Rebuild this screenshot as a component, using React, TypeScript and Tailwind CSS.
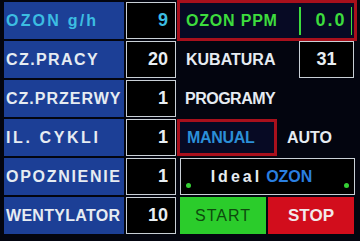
const font = { fontFamily: '"Liberation Sans", Arial, sans-serif' };

type Row = { label: string; value: string; track: string; cyan?: boolean };

const rows: Row[] = [
  { label: "OZON g/h", value: "9", track: "tracking-[2.2px]", cyan: true },
  { label: "CZ.PRACY", value: "20", track: "tracking-[1.4px]" },
  { label: "CZ.PRZERWY", value: "1", track: "tracking-[1px]" },
  { label: "IL. CYKLI", value: "1", track: "tracking-[2.6px]" },
  { label: "OPOZNIENIE", value: "1", track: "tracking-[1.7px]" },
  { label: "WENTYLATOR", value: "10", track: "tracking-[0.3px]" },
];

function ValueBox({ value, cyan }: { value: string; cyan?: boolean }) {
  return (
    <div className="flex h-full items-center justify-end border-[1.5px] border-[#c9d0d6] bg-black pr-[7px]">
      <span className={`text-[18px] font-bold ${cyan ? "text-[#3cbde2]" : "text-[#e8eef2]"}`}>{value}</span>
    </div>
  );
}

export default function App() {
  return (
    <div
      className="flex h-[241px] w-[360px] gap-[1px] overflow-hidden bg-[#03050f] pl-[4px] pt-[2px]"
      style={font}
    >
      {/* left column: settings */}
      <div className="grid w-[172px] grid-rows-[37px_37px_37px_37px_37px_37px] gap-y-[2px]">
        {rows.map((r) => (
          <div key={r.label} className="grid grid-cols-[120px_50px] gap-x-[2px]">
            <div className="flex items-center bg-[#1c3f96] pl-[2px]">
              <span
                className={`whitespace-pre text-[16px] font-bold ${r.track} ${
                  r.cyan ? "text-[#3cbde2]" : "text-[#e6ecf2]"
                }`}
              >
                {r.label}
              </span>
            </div>
            <ValueBox value={r.value} cyan={r.cyan} />
          </div>
        ))}
      </div>

      {/* right column */}
      <div className="grid w-[180px] grid-rows-[37px_37px_37px_37px_37px_37px] gap-y-[2px]">
        <div className="-mt-[2px] flex h-[41px] items-center border-[3px] border-[#a8101c] bg-[#070a24]">
          <span className="w-[119px] pl-[6px] text-[16px] font-bold tracking-[0.8px] text-[#3ddc3d] whitespace-pre">
            OZON PPM
          </span>
          <div className="h-[28px] w-[1.5px] bg-[#3ddc3d]" />
          <span className="flex-1 pr-[4px] text-right text-[18px] font-bold tracking-[2px] text-[#3ddc3d]">
            0.0
          </span>
          <div className="mr-[2px] h-[28px] w-[1.5px] bg-[#3ddc3d]" />
        </div>

        <div className="flex items-center">
          <span className="w-[122px] pl-[9px] text-[16px] font-bold text-[#e6ecf2]">KUBATURA</span>
          <div className="flex h-full w-[55px] items-center justify-center border-[1.5px] border-[#c9d0d6] bg-black">
            <span className="text-[18px] font-bold text-[#e8eef2]">31</span>
          </div>
        </div>

        <div className="flex items-center pl-[8px]">
          <span className="text-[16px] font-bold tracking-[-0.5px] text-[#e6ecf2]">PROGRAMY</span>
        </div>

        <div className="flex items-center">
          <div className="flex h-full w-[100px] items-center border-[3px] border-[#a8101c] bg-[#070a24] pl-[7px]">
            <span className="text-[16px] font-bold tracking-[-0.3px] text-[#2b8fd8]">MANUAL</span>
          </div>
          <span className="pl-[10px] text-[16px] font-bold text-[#e6ecf2]">AUTO</span>
        </div>

        <div className="relative ml-[3px] flex w-[175px] items-center justify-center border-[1.5px] border-[#c9d0d6] bg-black pr-[12px]">
          <span className="text-[16px] font-bold tracking-[3px] text-[#e6ecf2]">Ideal</span>
          <span className="pl-[4px] text-[16px] font-bold text-[#2a7fe0]">OZON</span>
          <div className="absolute bottom-[6px] left-[5px] h-[5px] w-[5px] rounded-full bg-[#35d035]" />
          <div className="absolute bottom-[6px] right-[5px] h-[5px] w-[5px] rounded-full bg-[#35d035]" />
        </div>

        <div className="ml-[3px] grid w-[174px] grid-cols-[86px_86px] gap-x-[2px]">
          <div className="flex items-center justify-center bg-[#2bcc2b]">
            <span className="text-[16px] tracking-[1px] text-[#0d4a0d]">START</span>
          </div>
          <div className="flex items-center justify-center bg-[#d20d1c]">
            <span className="text-[17px] font-bold text-[#f2e8ea]">STOP</span>
          </div>
        </div>
      </div>
    </div>
  );
}
